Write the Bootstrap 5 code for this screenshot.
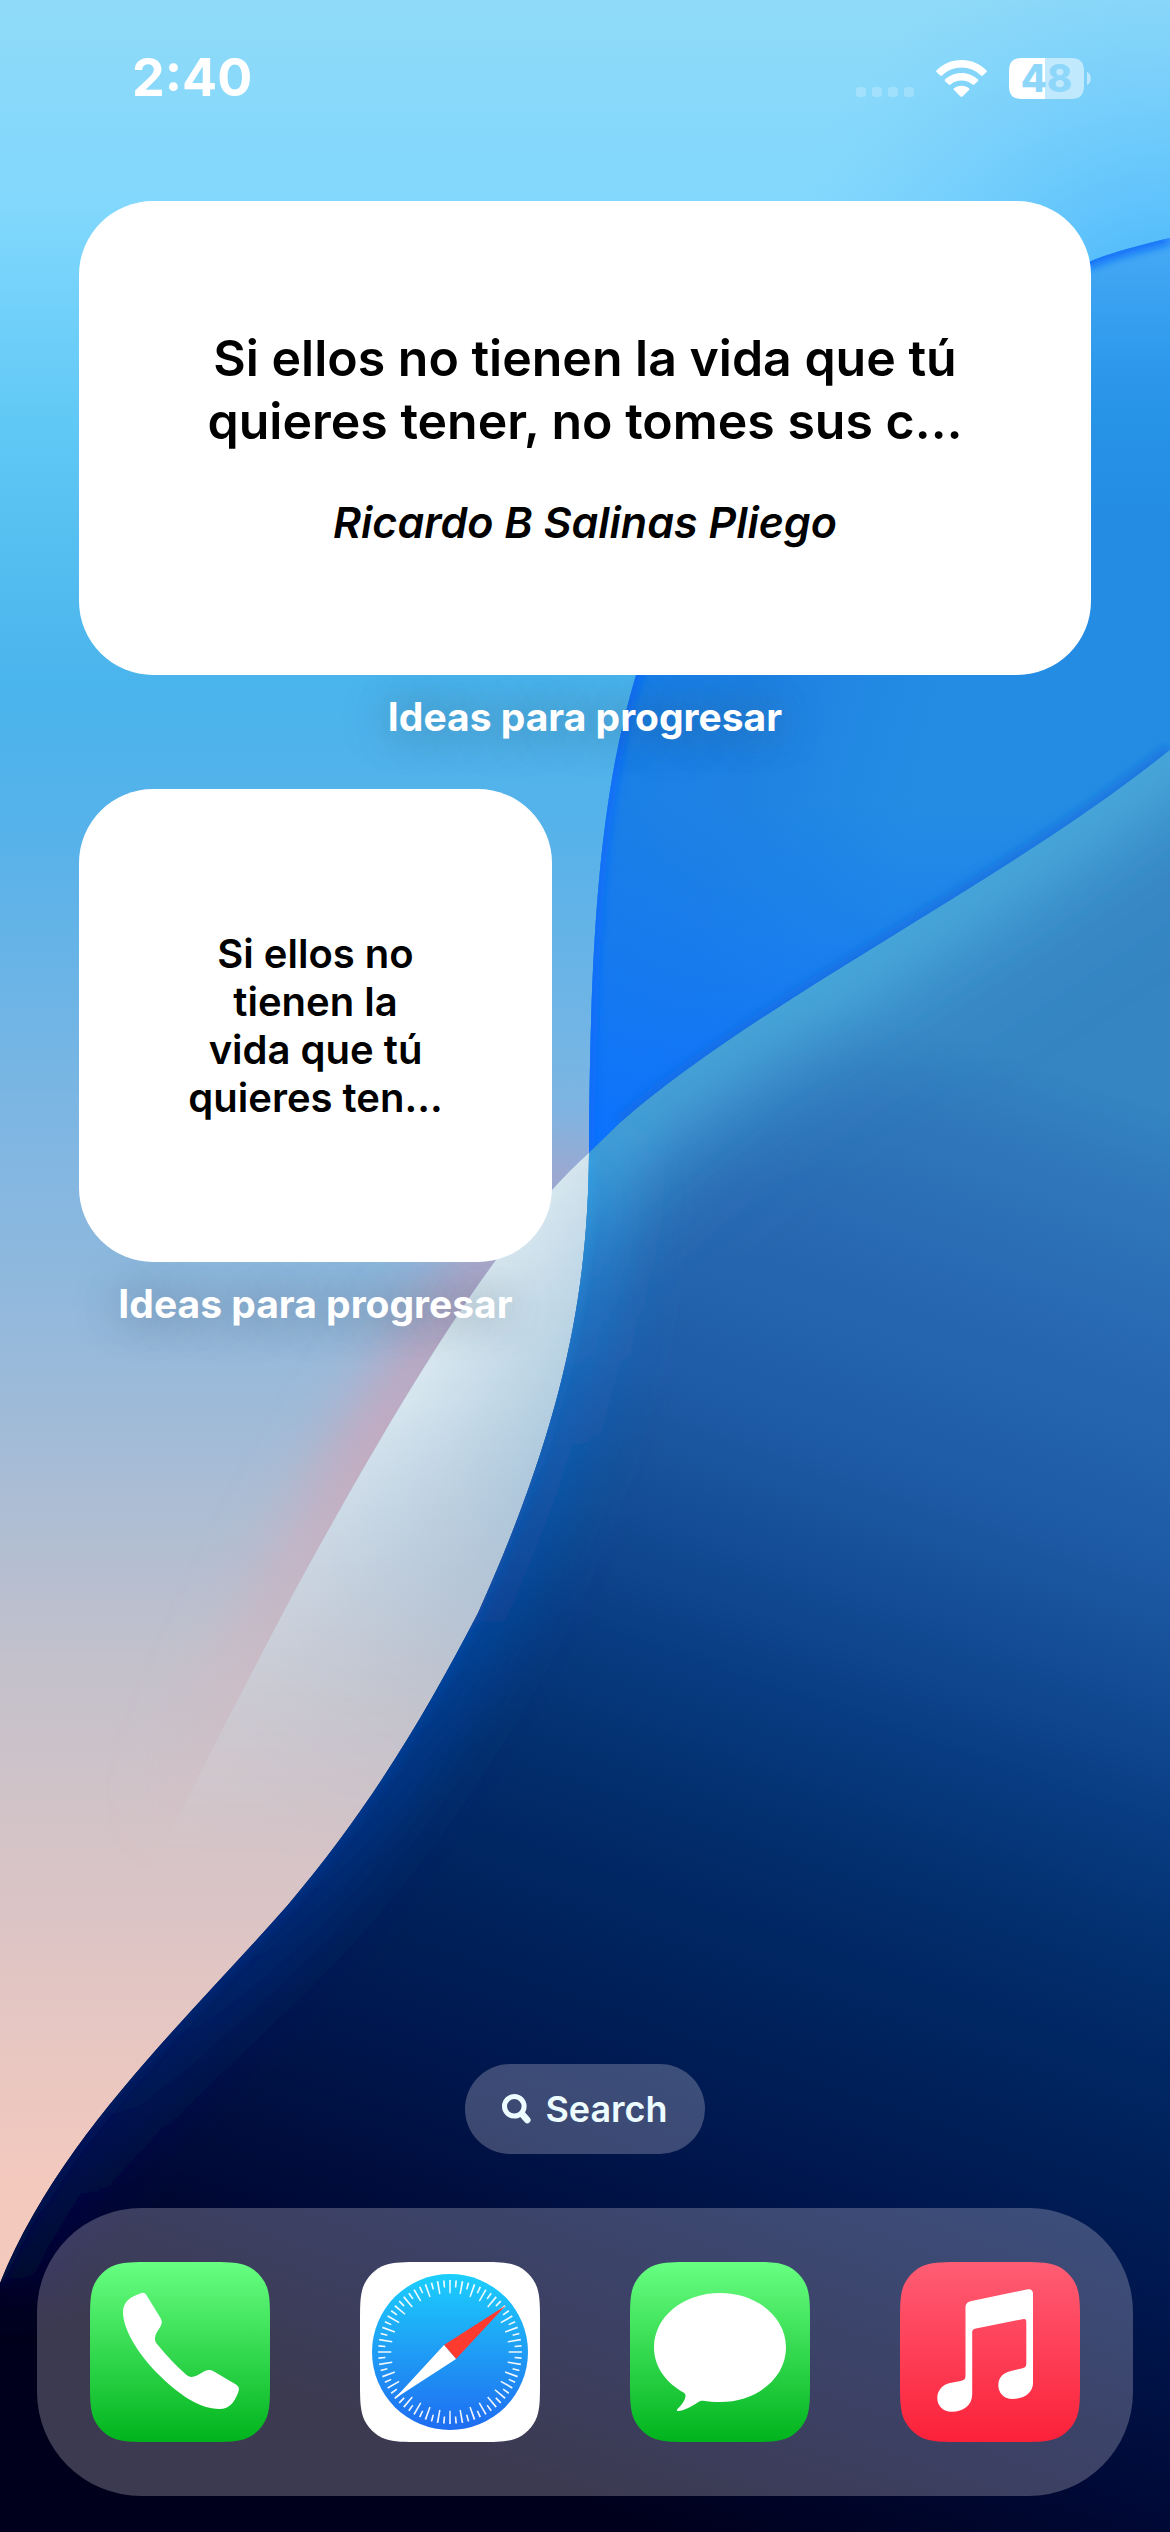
<!DOCTYPE html>
<html lang="es">
<head>
<meta charset="utf-8">
<meta name="viewport" content="width=device-width, initial-scale=1">
<title>Home Screen</title>
<link href="https://cdn.jsdelivr.net/npm/bootstrap@5.3.0/dist/css/bootstrap.min.css" rel="stylesheet">
<style>
  body { font-family: Inter, "Liberation Sans", sans-serif; background: #4ab5ec; }
  .wallpaper { inset: 0; z-index: 0; }
  .screen { z-index: 1; padding-bottom: 36px; }
  .status { padding: 48px 79px 0 132px; margin-bottom: 93px; height: 108px; }
  .clock { font-size: 52px; line-height: 60px; font-weight: 700; }
  .status-icons { gap: 22px; }
  .battery { width: 82px; height: 41px; }
  .battery-level { font-size: 38px; line-height: 41px; font-weight: 800; color: #8ed7fa; width: 75px; inset: 0 auto 0 0; }
  .widgets { padding: 0 79px; }
  .widget-row { --bs-gutter-x: 66px; }
  .widget { border: 0; border-radius: 74px; color: #000; }
  .widget-wide { min-height: 474px; }
  .widget-square { aspect-ratio: 1; }
  .quote-lg { font-size: 50px; line-height: 63px; font-weight: 600; }
  .quote-author { font-size: 43px; line-height: 54px; font-weight: 600; margin-top: 42px; }
  .quote-sm { font-size: 40px; line-height: 48px; font-weight: 600; }
  .widget-label { font-size: 39px; line-height: 44px; font-weight: 700; margin: 20px 0 50px; text-shadow: 0 0 40px rgba(60, 80, 100, .6); }
  .search-pill { width: 240px; height: 90px; border-radius: 45px; gap: 14px; font-size: 36px; line-height: 44px; font-weight: 600; margin-bottom: 54px; }
  .search-pill, .search-pill:hover { background: rgba(240, 230, 240, .25); color: #ecfcff; border: 0; }
  .dock { margin: 0 37px; padding: 54px 53px; border-radius: 104px; background: rgba(240, 230, 240, .25); }
  .app-icon, .app-icon svg { display: block; width: 180px; height: 180px; }
</style>
<script src="https://cdn.jsdelivr.net/npm/bootstrap@5.3.0/dist/js/bootstrap.bundle.min.js"></script>
</head>
<body class="position-relative min-vh-100">

<svg class="wallpaper position-absolute w-100 h-100" viewBox="0 0 1170 2532" preserveAspectRatio="none" aria-hidden="true">
  <defs>
    <linearGradient id="sky" x1="0" y1="0" x2="0" y2="2532" gradientUnits="userSpaceOnUse">
      <stop offset="0" stop-color="#8fdaf8"/>
      <stop offset=".08" stop-color="#82d8fd"/>
      <stop offset=".17" stop-color="#5fc8f5"/>
      <stop offset=".27" stop-color="#4ab4ec"/>
      <stop offset=".33" stop-color="#57b2ea"/>
      <stop offset=".44" stop-color="#7db6e3"/>
      <stop offset=".55" stop-color="#9cbad9"/>
      <stop offset=".66" stop-color="#c4c1cb"/>
      <stop offset=".77" stop-color="#dfc5c4"/>
      <stop offset=".86" stop-color="#f3c9be"/>
      <stop offset="1" stop-color="#f5cabf"/>
    </linearGradient>
    <radialGradient id="skyDeep" cx="1170" cy="330" r="400" gradientUnits="userSpaceOnUse">
      <stop offset="0" stop-color="#45b2fb"/>
      <stop offset=".3" stop-color="#4fb9fb" stop-opacity=".7"/>
      <stop offset="1" stop-color="#70c8fb" stop-opacity="0"/>
    </radialGradient>
    <linearGradient id="lens" x1="560" y1="400" x2="1000" y2="520" gradientUnits="userSpaceOnUse">
      <stop offset="0" stop-color="#147bee"/>
      <stop offset=".6" stop-color="#1f82e2"/>
      <stop offset="1" stop-color="#248de3"/>
    </linearGradient>
    <linearGradient id="lensTop" x1="0" y1="240" x2="0" y2="520" gradientUnits="userSpaceOnUse">
      <stop offset="0" stop-color="#48abf6"/>
      <stop offset="1" stop-color="#1f98ec" stop-opacity="0"/>
    </linearGradient>
    <linearGradient id="lensTip" x1="0" y1="800" x2="0" y2="1150" gradientUnits="userSpaceOnUse">
      <stop offset="0" stop-color="#1273f5" stop-opacity="0"/>
      <stop offset="1" stop-color="#0b72ff"/>
    </linearGradient>
    <linearGradient id="deep" x1="-218" y1="624" x2="-717" y2="2049" gradientUnits="userSpaceOnUse">
      <stop offset="0" stop-color="#3585c2"/>
      <stop offset=".05" stop-color="#3079bb"/>
      <stop offset=".15" stop-color="#2869b3"/>
      <stop offset=".27" stop-color="#1f5ca8"/>
      <stop offset=".37" stop-color="#134c94"/>
      <stop offset=".45" stop-color="#083c82"/>
      <stop offset=".55" stop-color="#022d6b"/>
      <stop offset=".64" stop-color="#00235d"/>
      <stop offset=".74" stop-color="#00184f"/>
      <stop offset=".87" stop-color="#000a38"/>
      <stop offset="1" stop-color="#00001c"/>
    </linearGradient>
    <linearGradient id="band" x1="300" y1="1450" x2="520" y2="1570" gradientUnits="userSpaceOnUse">
      <stop offset="0" stop-color="#e6f2f6"/>
      <stop offset=".3" stop-color="#deebf1"/>
      <stop offset="1" stop-color="#a9c8dc"/>
    </linearGradient>
    <linearGradient id="bandFade" x1="0" y1="1150" x2="0" y2="1860" gradientUnits="userSpaceOnUse">
      <stop offset="0" stop-color="#fff"/>
      <stop offset=".35" stop-color="#ddd"/>
      <stop offset=".6" stop-color="#777"/>
      <stop offset=".8" stop-color="#2a2a2a"/>
      <stop offset="1" stop-color="#000"/>
    </linearGradient>
    <linearGradient id="blush" x1="0" y1="1100" x2="0" y2="1850" gradientUnits="userSpaceOnUse">
      <stop offset="0" stop-color="#a596c4"/>
      <stop offset=".45" stop-color="#dc9fb0"/>
      <stop offset="1" stop-color="#dcb8bd" stop-opacity="0"/>
    </linearGradient>
    <linearGradient id="rim" x1="0" y1="1150" x2="0" y2="2283" gradientUnits="userSpaceOnUse">
      <stop offset="0" stop-color="#35a4e6"/>
      <stop offset=".22" stop-color="#1668c0"/>
      <stop offset=".45" stop-color="#0547a4"/>
      <stop offset=".7" stop-color="#002c80"/>
      <stop offset="1" stop-color="#000a45"/>
    </linearGradient>
    <mask id="bandMask" maskUnits="userSpaceOnUse" x="0" y="1100" width="700" height="900"><rect x="0" y="1100" width="700" height="900" fill="url(#bandFade)"/></mask>
    <filter id="soft" filterUnits="userSpaceOnUse" x="-200" y="0" width="1570" height="2532"><feGaussianBlur stdDeviation="34"/></filter>
    <filter id="wide" filterUnits="userSpaceOnUse" x="-200" y="0" width="1570" height="2532"><feGaussianBlur stdDeviation="55"/></filter>
    <filter id="fine" filterUnits="userSpaceOnUse" x="-200" y="0" width="1570" height="2532"><feGaussianBlur stdDeviation="5"/></filter>
    <clipPath id="lensClip"><path d="M1170 238C1140 245 1110 253 1091 261C850 340 690 480 636 675C598 800 590 950 589 1153L620 1123C760 1000 1010 880 1170 750Z"/></clipPath>
    <clipPath id="deepClip"><path d="M1170 750C1010 880 760 1000 620 1123L589 1153C588 1290 565 1420 478 1613C425 1715 370 1808 287 1906C187 2020 60 2135 0 2283V2532H1170Z"/></clipPath>
    <clipPath id="skyLeft"><path d="M0 900H589V1153C500 1232 400 1400 299 1583C250 1675 215 1745 130 1910H0Z"/></clipPath>
  </defs>
  <rect width="1170" height="2532" fill="url(#sky)"/>
  <rect width="1170" height="1000" fill="url(#skyDeep)"/>
  <g clip-path="url(#skyLeft)">
    <path d="M589 1153C500 1232 400 1400 299 1583C265 1650 240 1700 180 1820" fill="none" stroke="url(#blush)" stroke-width="50" filter="url(#soft)"/>
  </g>
  <path d="M589 1153C500 1232 400 1400 299 1583C250 1675 215 1745 130 1910H287C370 1808 425 1715 478 1613C565 1420 588 1290 589 1153Z" fill="url(#band)" mask="url(#bandMask)"/>
  <g clip-path="url(#lensClip)">
    <rect x="580" y="230" width="590" height="930" fill="url(#lens)"/>
    <rect x="580" y="230" width="590" height="300" fill="url(#lensTop)"/>
    <rect x="580" y="800" width="590" height="360" fill="url(#lensTip)"/>
    <path d="M1170 750C1010 880 760 1000 620 1123" fill="none" stroke="#1668de" stroke-opacity=".6" stroke-width="14" filter="url(#fine)"/>
    <path d="M1170 238C1140 245 1110 253 1091 261C850 340 690 480 636 675C598 800 590 950 589 1153" fill="none" stroke="#0a6dfa" stroke-width="12" filter="url(#fine)"/>
  </g>
  <g clip-path="url(#deepClip)">
    <rect y="740" width="1170" height="1792" fill="url(#deep)"/>
    <path d="M1290 650C1010 880 760 1000 620 1123L540 1200" fill="none" stroke="#45a8dc" stroke-opacity=".75" stroke-width="110" filter="url(#wide)"/>
    <path d="M1250 690C1010 880 760 1000 620 1123L560 1180" fill="none" stroke="#52b6e4" stroke-width="34" filter="url(#soft)"/>
    <path d="M589 1153C588 1290 565 1420 478 1613C425 1715 370 1808 287 1906C187 2020 60 2135 0 2283" fill="none" stroke="url(#rim)" stroke-opacity=".9" stroke-width="60" filter="url(#soft)"/>
    <path d="M589 1153C588 1290 565 1420 478 1613C425 1715 370 1808 287 1906C187 2020 60 2135 0 2283" fill="none" stroke="url(#rim)" stroke-width="8" filter="url(#fine)"/>
  </g>
</svg>

<div class="screen position-relative d-flex flex-column min-vh-100">
  <header class="status d-flex justify-content-between align-items-center text-white">
    <time class="clock">2:40</time>
    <div class="status-icons d-flex align-items-center">
      <svg width="58" height="41" viewBox="0 0 58 41" role="img" aria-label="No signal" fill="#fff" fill-opacity=".22">
        <rect y="29" width="10" height="10" rx="3"/><rect x="16" y="29" width="10" height="10" rx="3"/><rect x="32" y="29" width="10" height="10" rx="3"/><rect x="48" y="29" width="10" height="10" rx="3"/>
      </svg>
      <svg width="51" height="37" viewBox="0 0 51 37" role="img" aria-label="Wi-Fi" fill="#fff">
        <path d="M25.500 0C35.500 0 44 4 50.300 10.200C51 11 51 11.500 50.300 12.200L46.800 15.600C46.200 16.200 45.600 16.200 45 15.600C39.500 10.500 33 7.600 25.500 7.600S11.500 10.500 6 15.600C5.400 16.200 4.800 16.200 4.200 15.600L.7 12.200C0 11.500 0 11 .7 10.200C7 4 15.500 0 25.500 0Z"/>
        <path d="M25.500 13C32 13 37.500 15.500 41.800 19.300C42.500 20 42.500 20.500 41.800 21.200L38.300 24.600C37.700 25.200 37.100 25.200 36.500 24.600C33.300 22 29.800 20.500 25.500 20.500S17.700 22 14.500 24.600C13.900 25.200 13.300 25.200 12.700 24.600L9.200 21.200C8.500 20.500 8.500 20 9.200 19.300C13.500 15.500 19 13 25.500 13Z"/>
        <path d="M25.500 25.700C28.500 25.700 31 26.700 33 28.200C33.700 28.900 33.700 29.300 33 30L26.500 36.400C25.800 37 25.200 37 24.500 36.400L18 30C17.300 29.300 17.300 28.900 18 28.200C20 26.700 22.500 25.700 25.500 25.700Z"/>
      </svg>
      <div class="battery position-relative">
        <svg class="d-block" width="82" height="41" viewBox="0 0 82 41" aria-hidden="true">
          <path d="M13 0H36V41H13C4 41 0 37 0 28V13C0 4 4 0 13 0Z" fill="#fff"/>
          <path d="M36 0H62C71 0 75 4 75 13V28C75 37 71 41 62 41H36ZM78 14C83 16 83 25 78 27Z" fill="#fff" fill-opacity=".52"/>
        </svg>
        <span class="battery-level position-absolute text-center">48</span>
      </div>
    </div>
  </header>

  <main class="widgets">
    <section>
      <div class="card widget widget-wide justify-content-center text-center">
        <p class="quote-lg mb-0">Si ellos no tienen la vida que tú<br>quieres tener, no tomes sus c…</p>
        <p class="quote-author fst-italic mb-0">Ricardo B Salinas Pliego</p>
      </div>
      <h2 class="widget-label text-white text-center">Ideas para progresar</h2>
    </section>
    <div class="row widget-row">
      <section class="col-6">
        <div class="card widget widget-square justify-content-center text-center">
          <p class="quote-sm mb-0">Si ellos no<br>tienen la<br>vida que tú<br>quieres ten…</p>
        </div>
        <h2 class="widget-label text-white text-center">Ideas para progresar</h2>
      </section>
    </div>
  </main>

  <button type="button" class="search-pill btn d-flex align-items-center justify-content-center mx-auto mt-auto p-0">
    <svg width="29" height="30" viewBox="0 0 29 30" fill="none" stroke="#ecfcff" stroke-linecap="round" aria-hidden="true"><circle cx="12.300" cy="12.300" r="9.800" stroke-width="5"/><path d="M20 20L25.300 26" stroke-width="6.500"/></svg>
    <span>Search</span>
  </button>

  <nav class="dock d-flex justify-content-between" aria-label="Dock">
    <a class="app-icon" href="#phone" aria-label="Phone">
      <svg viewBox="0 0 180 180">
        <defs>
          <linearGradient id="green" x1="0" y1="0" x2="0" y2="1"><stop offset="0" stop-color="#68ff82"/><stop offset="1" stop-color="#00b31c"/></linearGradient>
          <path id="tile" d="M0 61C0 43.500 0 34.700 3 25.300C6.800 14.900 14.900 6.800 25.300 3C34.700 0 43.500 0 61 0H119C136.500 0 145.300 0 154.700 3C165.100 6.800 173.200 14.900 177 25.300C180 34.700 180 43.500 180 61V119C180 136.500 180 145.300 177 154.700C173.200 165.100 165.100 173.200 154.700 177C145.300 180 136.500 180 119 180H61C43.500 180 34.700 180 25.300 177C14.900 173.200 6.800 165.100 3 154.700C0 145.300 0 136.500 0 119Z"/>
        </defs>
        <use href="#tile" fill="url(#green)"/>
        <path fill="#fff" d="M50 31.500C54 30 55 31 57 34L70.500 56C72.500 59 72 61.500 70.500 64.500L67 70C64.300 75 64.300 79 67 82C76 93 85 103 96 112.500C99 115.500 102.500 115.500 107 113.500L114 109.500C117.500 107.500 120.500 107.500 123.500 109.300L146 122.500C149.500 125 149.500 127 148 131C144 141 139 147 129.500 147C110 147 88 132.500 66 110C46 89 33 66 33 50C33 40 40 35 50 31.500Z"/>
      </svg>
    </a>
    <a class="app-icon" href="#safari" aria-label="Safari">
      <svg viewBox="0 0 180 180">
        <defs><linearGradient id="compass" x1="0" y1="0" x2="0" y2="1"><stop offset="0" stop-color="#1bcffd"/><stop offset=".5" stop-color="#1f9df5"/><stop offset="1" stop-color="#1e6cf1"/></linearGradient></defs>
        <use href="#tile" fill="#fff"/>
        <circle cx="90" cy="90" r="78" fill="url(#compass)"/>
        <g fill="none" stroke="#fff" stroke-opacity=".92">
          <circle cx="90" cy="90" r="65.300" stroke-width="13.300" pathLength="360" stroke-dasharray="1.400 8.600" stroke-dashoffset=".7"/>
          <circle cx="90" cy="90" r="68.300" stroke-width="7" pathLength="360" stroke-dasharray="1.400 8.600" stroke-dashoffset="-4.300"/>
        </g>
        <path d="M145.700 43.500L84 83L96 97Z" fill="#ff3b30"/>
        <path d="M34.300 137L84 83L96 97Z" fill="#fff"/>
      </svg>
    </a>
    <a class="app-icon" href="#messages" aria-label="Messages">
      <svg viewBox="0 0 180 180">
        <use href="#tile" fill="url(#green)"/>
        <path fill="#fff" d="M90 31C127 31 156 55 156 85.500S127 140 90 140C84 140 78 139.600 73 138.800C71 138.500 70 139 68 140.200C61 145 54 148.500 48 149C46.500 149 46.500 148 47.500 147C52 142.500 55 138.500 55.500 134.500C55.700 132.500 55 131.500 53.500 130.500C35 120 24 104 24 85.500C24 55 53 31 90 31Z"/>
      </svg>
    </a>
    <a class="app-icon" href="#music" aria-label="Music">
      <svg viewBox="0 0 180 180">
        <defs><linearGradient id="red" x1="0" y1="0" x2="0" y2="1"><stop offset="0" stop-color="#ff5d74"/><stop offset="1" stop-color="#fb2139"/></linearGradient></defs>
        <use href="#tile" fill="url(#red)"/>
        <path fill="#fff" d="M71.500 39L128 27.300C131 26.800 133 28.500 133 31.500V121C133 130 125 137 112.500 137C104 137 98.300 131 98.300 123C98.300 115 104 110.500 111 109L121.500 106.500C125 105.500 126.300 105 126.300 101V60.500C126.300 57.500 125.500 56.600 122.500 57.200L76 66.500C73 67.200 72.200 68 72.200 71V132C72.200 143 64 149.700 51.500 149.700C43 149.700 37.300 144 37.300 136C37.300 128 43 122.500 50 121L60.500 119C64.500 118 65.500 117 65.500 113V46C65.500 42 67 40 71.500 39Z"/>
      </svg>
    </a>
  </nav>
</div>
</body>
</html>
